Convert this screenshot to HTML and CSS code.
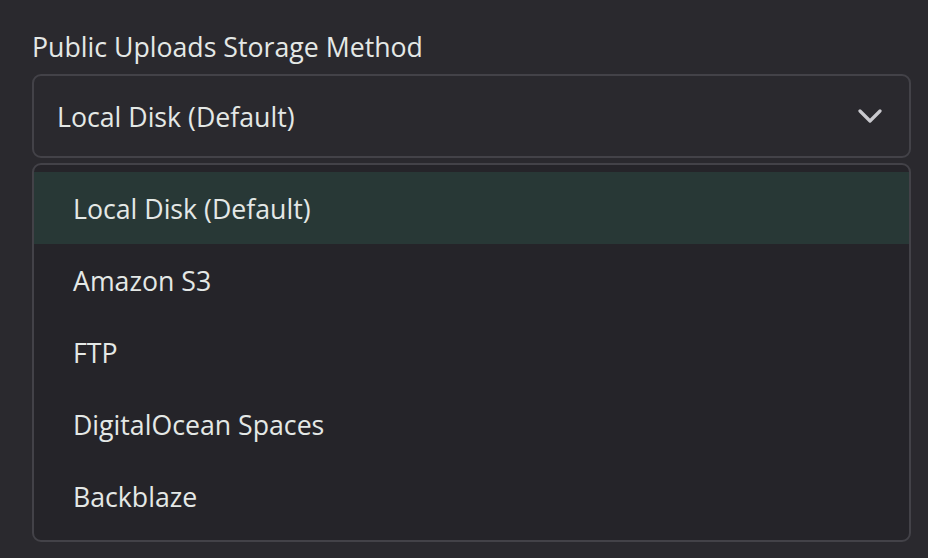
FILE: index.html
```html
<!DOCTYPE html>
<html>
<head>
<meta charset="utf-8">
<link rel="stylesheet" href="styles.css">
</head>
<body>
<div class="field">
  <div class="label">Public Uploads Storage Method</div>
  <div class="select">
    <span class="value">Local Disk (Default)</span>
    <svg class="chevron" width="24" height="16" viewBox="0 0 24 16"><path d="M2 3 L12 13 L22 3" fill="none" stroke="#c9c9ce" stroke-width="3.2" stroke-linecap="round" stroke-linejoin="round"/></svg>
  </div>
  <div class="menu">
    <div class="item active">Local Disk (Default)</div>
    <div class="item">Amazon S3</div>
    <div class="item">FTP</div>
    <div class="item">DigitalOcean Spaces</div>
    <div class="item">Backblaze</div>
  </div>
</div>
</body>
</html>
```
FILE: styles.css
```css
html, body {
  margin: 0;
  padding: 0;
  background: #2a292e;
  width: 928px;
  height: 558px;
  overflow: hidden;
}
body {
  font-family: "Open Sans", "Noto Sans", sans-serif;
  color: #e4e8e6;
}
.field {
  padding: 28px 17px 0 32px;
}
.label {
  font-size: 26.7px;
  line-height: 38px;
  height: 38px;
}
.select {
  margin-top: 8px;
  border: 2px solid #434248;
  border-radius: 9px;
  background: #2a292e;
  display: flex;
  align-items: center;
  justify-content: space-between;
  padding: 0 27px 0 23px;
  box-sizing: border-box;
  height: 84px;
}
.value {
  font-size: 26.7px;
}
.chevron {
  display: block;
}
.menu {
  margin-top: 5px;
  border: 2px solid #434248;
  border-radius: 9px;
  background: #252429;
  padding: 7px 0;
  box-sizing: border-box;
  height: 379px;
  overflow: hidden;
}
.item {
  height: 72px;
  display: flex;
  align-items: center;
  padding-left: 39px;
  font-size: 26.7px;
}
.item.active {
  background: #283836;
}
```
